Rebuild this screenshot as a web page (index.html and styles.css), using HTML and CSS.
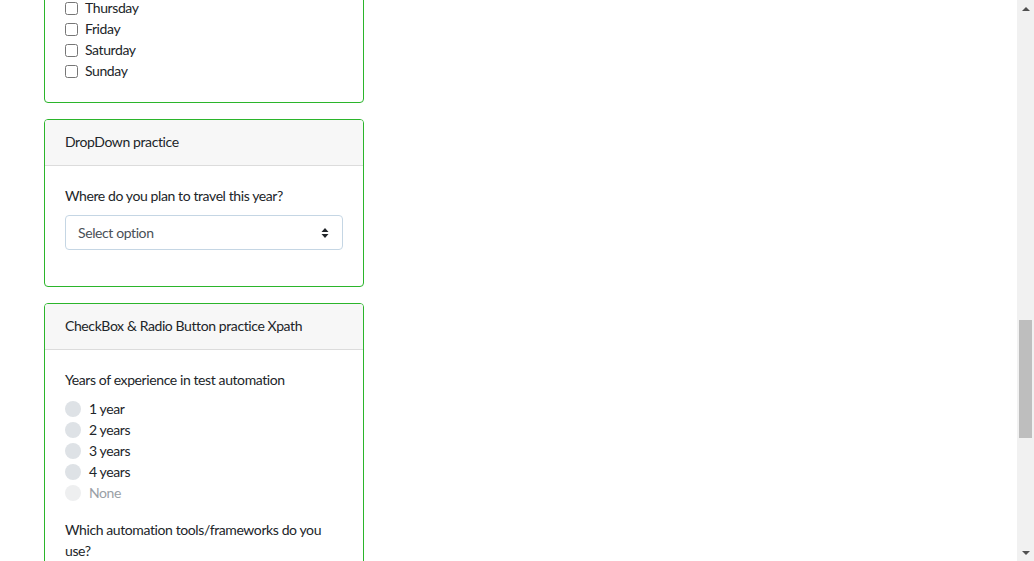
FILE: index.html
```html
<!DOCTYPE html>
<html lang="en">
<head>
<meta charset="utf-8">
<title>Practice Page</title>
<link rel="stylesheet" href="styles.css">
</head>
<body>
<div class="app">
  <main class="viewport">
    <div class="column">
      <section class="card card-first">
        <div class="card-body">
          <label class="check"><input type="checkbox"><span>Thursday</span></label>
          <label class="check"><input type="checkbox"><span>Friday</span></label>
          <label class="check"><input type="checkbox"><span>Saturday</span></label>
          <label class="check"><input type="checkbox"><span>Sunday</span></label>
        </div>
      </section>

      <section class="card">
        <div class="card-header">DropDown practice</div>
        <div class="card-body">
          <div class="form-group">
            <label class="field-label field-label-select">Where do you plan to travel this year?</label>
            <div class="select">
              <span>Select option</span>
              <svg class="select-arrow" width="8" height="12" viewBox="0 0 8 12"><path d="M4 1 L7.5 5 H0.5 Z M4 11 L7.5 7 H0.5 Z" fill="#212529"/></svg>
            </div>
          </div>
        </div>
      </section>

      <section class="card">
        <div class="card-header">CheckBox &amp; Radio Button practice Xpath</div>
        <div class="card-body">
          <div class="form-group">
            <label class="field-label">Years of experience in test automation</label>
            <div class="radio"><span class="dot"></span><span>1 year</span></div>
            <div class="radio"><span class="dot"></span><span>2 years</span></div>
            <div class="radio"><span class="dot"></span><span>3 years</span></div>
            <div class="radio"><span class="dot"></span><span>4 years</span></div>
            <div class="radio disabled"><span class="dot"></span><span>None</span></div>
          </div>
          <div class="form-group">
            <label class="field-label">Which automation tools/frameworks do you use?</label>
          </div>
        </div>
      </section>
    </div>
  </main>
  <aside class="scrollbar">
    <div class="sb-btn"><span class="tri-up"></span></div>
    <div class="sb-track">
      <div class="sb-thumb"></div>
    </div>
    <div class="sb-btn"><span class="tri-down"></span></div>
  </aside>
</div>
</body>
</html>
```

FILE: styles.css
```css
html, body {
  margin: 0;
  padding: 0;
  height: 100%;
}
body {
  font-family: "Lato", "Noto Sans", sans-serif;
  font-size: 14px;
  line-height: 21px;
  letter-spacing: -0.4px;
  color: #212529;
  background: #fff;
}
.app {
  display: flex;
  height: 561px;
  overflow: hidden;
}
.viewport {
  flex: 1;
  overflow: hidden;
  padding-left: 44px;
}
.column {
  width: 320px;
  display: flex;
  flex-direction: column;
  gap: 16px;
}
.card {
  border: 1px solid #2bb52b;
  border-radius: 4px;
  overflow: hidden;
  flex-shrink: 0;
}
.card-first {
  margin-top: -23px;
}
.card-header {
  background: #f7f7f7;
  border-bottom: 1px solid #dcdcdc;
  padding: 11px 20px 13px;
  color: #212529;
}
.card-body {
  padding: 19px 20px 21px;
}
.check {
  display: flex;
  align-items: center;
  height: 21px;
}
.check input {
  width: 13px;
  height: 13px;
  margin: 1px 7px 0 0;
}
.form-group {
  margin-bottom: 16px;
}
.form-group:last-child {
  margin-bottom: 0;
}
.card .form-group:only-child {
  margin-bottom: 15px;
}
.field-label {
  display: block;
  margin-bottom: 8px;
}
.field-label-select {
  margin-bottom: 9px;
}
.select {
  height: 35px;
  box-sizing: border-box;
  border: 1px solid #c5d6e4;
  border-radius: 4px;
  display: flex;
  align-items: center;
  justify-content: space-between;
  padding: 0 12px;
  color: #495057;
}
.select-arrow {
  margin-right: 1px;
}
.radio {
  display: flex;
  align-items: center;
  height: 21px;
  gap: 8px;
}
.dot {
  width: 16px;
  height: 16px;
  border-radius: 50%;
  background: #dee2e6;
}
.radio.disabled {
  color: #9aa0a6;
}
.radio.disabled .dot {
  background: #eeeff0;
}
.scrollbar {
  width: 17px;
  background: #f1f1f1;
  display: flex;
  flex-direction: column;
}
.sb-btn {
  height: 17px;
  display: flex;
  align-items: center;
  justify-content: center;
}
.tri-up, .tri-down {
  width: 0;
  height: 0;
  border-left: 4px solid transparent;
  border-right: 4px solid transparent;
}
.tri-up {
  border-bottom: 4px solid #505050;
}
.tri-down {
  border-top: 4px solid #505050;
}
.sb-track {
  flex: 1;
  padding-top: 303px;
}
.sb-thumb {
  margin: 0 2px;
  height: 118px;
  background: #bebebe;
}
```
